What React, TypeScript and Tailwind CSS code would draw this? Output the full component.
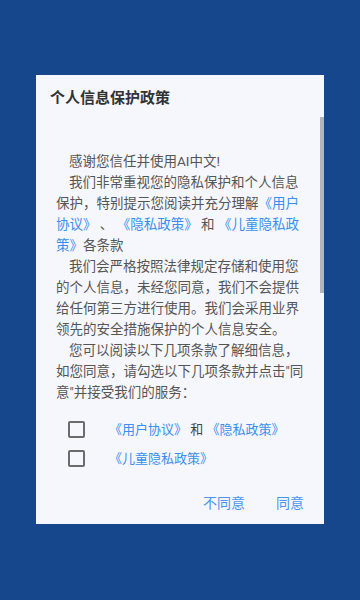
const FONT = "font-['Roboto','Noto_Sans_CJK_SC',sans-serif]";

function Link({ children }: { children: React.ReactNode }) {
  return <span className="text-[#3b8ef0]">{children}</span>;
}

function CheckRow({ children }: { children: React.ReactNode }) {
  return (
    <div className="flex items-center h-[29px]">
      <div className="ml-[32px] w-[17px] h-[17px] rounded-[2px] border-2 border-[#6b6b6b]" />
      <div className="ml-[24px] text-[13px] text-[#444]">{children}</div>
    </div>
  );
}

export default function App() {
  const lines: React.ReactNode[] = [
    <span className="pl-[13px]">感谢您信任并使用AI中文!</span>,
    <span className="pl-[13px]">我们非常重视您的隐私保护和个人信息</span>,
    <span>保护，特别提示您阅读并充分理解<Link>《用户</Link></span>,
    <span><Link>协议》</Link> 、 <Link>《隐私政策》</Link> 和 <Link>《儿童隐私政</Link></span>,
    <span><Link>策》</Link>各条款</span>,
    <span className="pl-[13px]">我们会严格按照法律规定存储和使用您</span>,
    <span>的个人信息，未经您同意，我们不会提供</span>,
    <span>给任何第三方进行使用。我们会采用业界</span>,
    <span>领先的安全措施保护的个人信息安全。</span>,
    <span className="pl-[13px]">您可以阅读以下几项条款了解细信息，</span>,
    <span>如您同意，请勾选以下几项条款并点击"同</span>,
    <span>意"并接受我们的服务：</span>,
  ];

  return (
    <div className={`w-[360px] h-[600px] bg-[#16478c] pt-[75px] ${FONT}`}>
      <div className="mx-[36px] w-[288px] h-[449px] bg-[#f5f7fc] flex flex-col">
        <div className="pt-[12px] pl-[14px] h-[42px] text-[15px] leading-[22px] font-semibold text-[#333]">
          个人信息保护政策
        </div>
        <div className="relative h-[288px] overflow-hidden">
          <div className="pt-[34px] pl-[20px] w-[270px] text-[13.5px] leading-[21px] text-[#555]">
            {lines.map((l, i) => (
              <div key={i} className="whitespace-nowrap">{l}</div>
            ))}
          </div>
          <div className="absolute right-0 top-0 w-[4px] h-[176px] bg-[#b4b4bc]" />
        </div>
        <div className="pt-[10px]">
          <CheckRow>
            <Link>《用户协议》</Link> 和 <Link>《隐私政策》</Link>
          </CheckRow>
          <CheckRow>
            <Link>《儿童隐私政策》</Link>
          </CheckRow>
        </div>
        <div className="flex justify-end gap-[31px] pr-[20px] mt-[20px] text-[14px] leading-[20px] text-[#4a94ee]">
          <span>不同意</span>
          <span>同意</span>
        </div>
      </div>
    </div>
  );
}
